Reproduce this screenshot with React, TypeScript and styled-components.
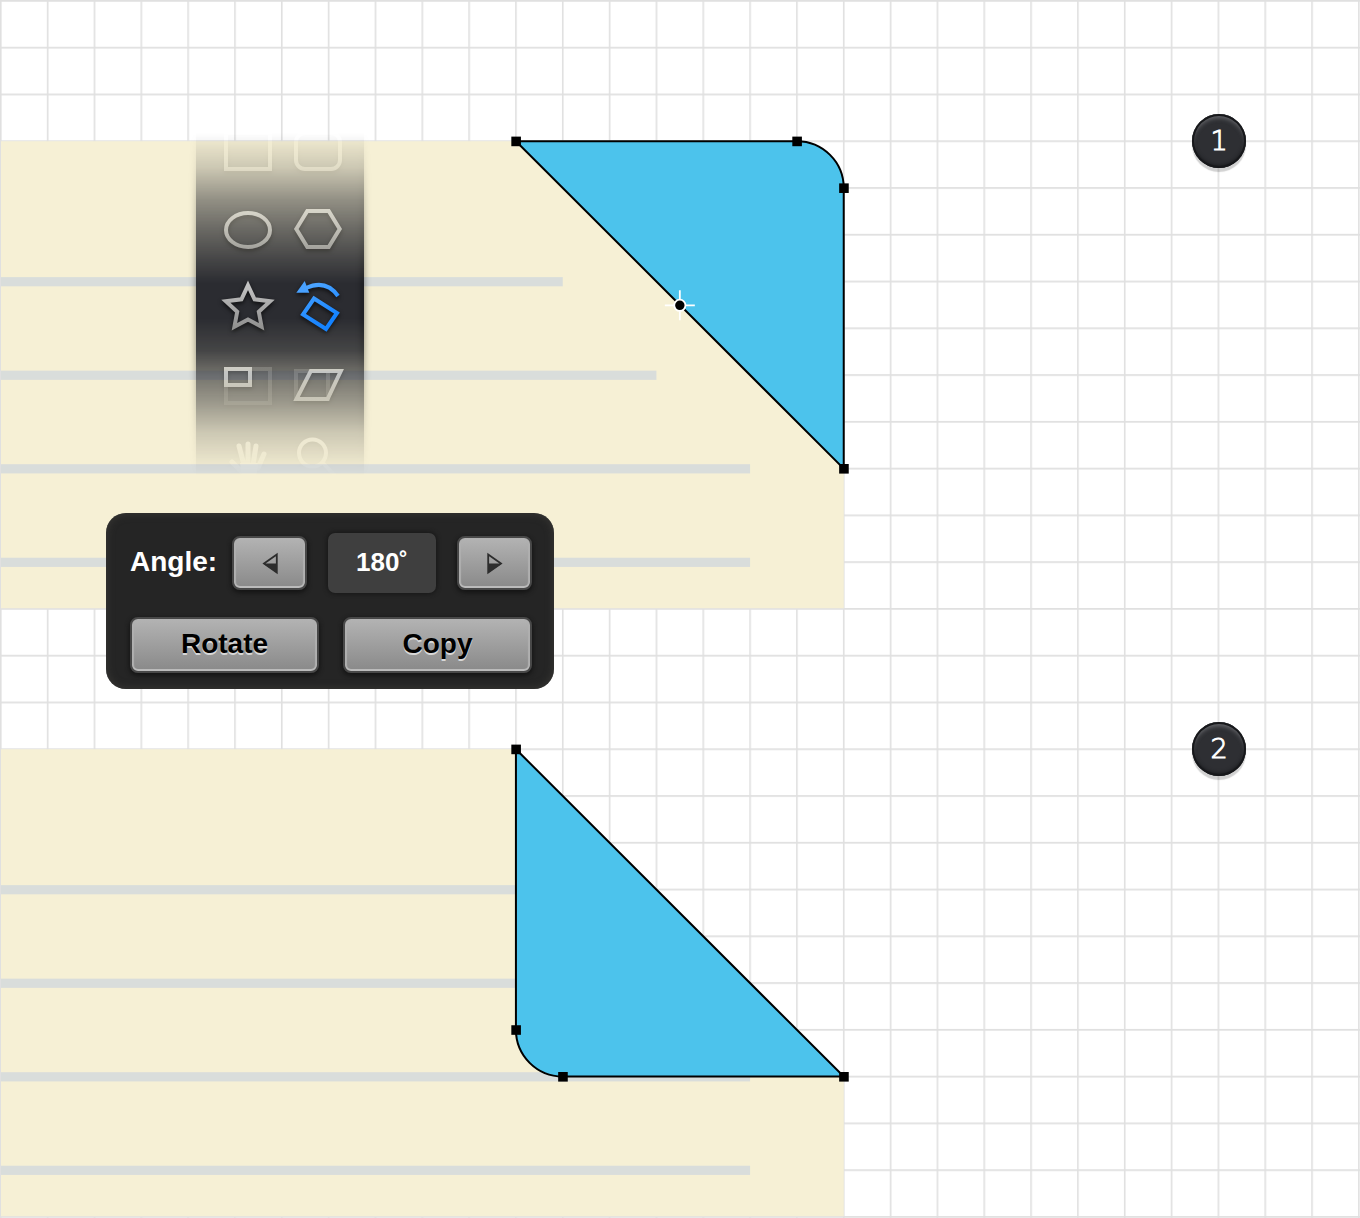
import React from "react";
import styled, { createGlobalStyle, css } from "styled-components";

const GlobalStyle = createGlobalStyle`
  *, *::before, *::after { box-sizing: border-box; }
  body {
    margin: 0;
    background: #fff;
    font-family: "Liberation Sans", Arial, sans-serif;
  }
`;

/* Spacing of the squared background. */
const COL = 46.83;
const ROW = 46.77;
const gx = (n: number) => 0.8 + n * COL;
const gy = (n: number) => 0.9 + n * ROW;

const Page = styled.main`
  position: relative;
  min-height: 100vh;
  overflow: hidden;
`;

const GridPaper = styled.svg`
  position: absolute;
  inset: 0;
  width: 100%;
  height: 100%;
`;

const Step = styled.section<{ $front?: boolean }>`
  position: relative;
  z-index: ${(p) => (p.$front ? 2 : 1)};
  display: flex;
  justify-content: flex-end;
  align-items: flex-start;
  height: 608px;
  padding: 114px 114px 0 0;
`;

const Artwork = styled.svg`
  position: absolute;
  top: 0;
  left: 0;
  overflow: visible;
`;

const Badge = styled.span`
  position: relative;
  display: grid;
  place-items: center;
  width: 54px;
  height: 54px;
  border-radius: 50%;
  background: #2e2f33;
  color: #fff;
  font: 200 27px/54px "DejaVu Sans", "DejaVu Sans Light", sans-serif;
  -webkit-text-stroke: 1px #fff;
  box-shadow:
    inset 0 0 0 2px #17181b,
    inset 0 4px 4px #66676b,
    inset 0 -2px 4px #111215,
    0 4px 1px rgba(0, 0, 0, 0.18);
`;

const ToolStrip = styled.div`
  position: absolute;
  top: 115px;
  left: 188px;
  padding: 8px;
  mask-image: linear-gradient(
    to bottom,
    transparent 18px,
    rgba(0, 0, 0, 0.06) 28px,
    rgba(0, 0, 0, 0.2) 52px,
    rgba(0, 0, 0, 0.5) 86px,
    rgba(0, 0, 0, 0.7) 116px,
    rgba(0, 0, 0, 0.88) 146px,
    #000 168px,
    #000 204px,
    rgba(0, 0, 0, 0.87) 236px,
    rgba(0, 0, 0, 0.64) 260px,
    rgba(0, 0, 0, 0.46) 286px,
    rgba(0, 0, 0, 0.2) 318px,
    rgba(0, 0, 0, 0.06) 346px,
    transparent 360px
  );
`;

const Tools = styled.div`
  display: grid;
  grid-template-columns: 56px 56px;
  gap: 22px 14px;
  width: 168px;
  padding-left: 24px;
  background: #2b2c31;
  box-shadow:
    inset -4px 0 4px rgba(0, 0, 0, 0.25),
    0 0 7px rgba(0, 0, 0, 0.5);
`;

const ToolButton = styled.button<{ $active?: boolean }>`
  display: block;
  width: 56px;
  height: 56px;
  padding: 0;
  border: 0;
  background: none;
  cursor: pointer;

  svg {
    display: block;
    fill: none;
    stroke: url(${(p) => (p.$active ? "#tool-blue" : "#tool-gray")});
    stroke-width: 4px;
    filter: drop-shadow(0 2px 2px rgba(0, 0, 0, 0.7));
  }
`;

const Panel = styled.form`
  position: absolute;
  top: 513px;
  left: 106px;
  display: grid;
  gap: 24px;
  width: 448px;
  padding: 20px 22px 16px 24px;
  border-radius: 20px;
  background: #252525;
  box-shadow: inset 0 0 8px #3b3a37;
`;

const PanelRow = styled.div`
  display: flex;
  align-items: center;
  gap: 21px;
`;

const ActionRow = styled(PanelRow)`
  gap: 24px;
`;

const AngleLabel = styled.label`
  flex: 1;
  margin: 0 -20px 2px 0;
  color: #fff;
  font-size: 28px;
  line-height: 32px;
  font-weight: 700;
  white-space: nowrap;
`;

const AngleInput = styled.input`
  width: 108px;
  height: 60px;
  padding: 0 0 2px;
  border: 0;
  border-radius: 7px;
  background: #3f3f3f;
  color: #fff;
  font: 700 26px/32px "Liberation Sans", Arial, sans-serif;
  text-align: center;
  box-shadow: 0 0 4px 1px #171717;
`;

const raised = css`
  border: 2px solid #484848;
  border-radius: 8px;
  background: linear-gradient(#b3b3b3, #898989);
  box-shadow:
    inset 0 -2px 0 #bbb,
    inset 2px 0 1px #b0b0b0,
    inset -2px 0 1px #b0b0b0,
    0 2px 4px 1px #151515;
  cursor: pointer;
`;

const NudgeButton = styled.button`
  ${raised}
  display: grid;
  place-items: center;
  width: 75px;
  height: 54px;
  padding: 0;
`;

const ActionButton = styled.button`
  ${raised}
  flex: 1;
  height: 56px;
  padding: 0 0 2px;
  color: #000;
  font: 700 28px/32px "Liberation Sans", Arial, sans-serif;
  text-shadow: 0 2px 0 #d8d8d8;
`;

type Tool = { name: string; active?: boolean; drawing: React.ReactNode };

const tools: Tool[] = [
  { name: "Rectangle", drawing: <rect x="6" y="10" width="44" height="36" /> },
  { name: "Rounded rectangle", drawing: <rect x="6" y="10" width="44" height="36" rx="9" /> },
  { name: "Ellipse", drawing: <ellipse cx="28" cy="29" rx="22" ry="17" /> },
  {
    name: "Polygon",
    drawing: <path d="M17.3 10H38.7L49.7 28L38.7 46H17.3L6.3 28Z" />,
  },
  {
    name: "Star",
    drawing: (
      <path d="M28 6.3L34.6 20.3L50.2 22.2L38.8 32.8L41.6 47.8L28 40.6L14.4 47.8L17.2 32.8L5.8 22.2L21.4 20.3Z" />
    ),
  },
  {
    name: "Rotate",
    active: true,
    drawing: (
      <>
        <path d="M16 9Q36 0 48 17" />
        <path d="M6.3 13.7L14.7 2L19.3 13.7Z" fill="#48a1ff" stroke="none" />
        <path d="M24 19.5L47 34L36 50L13 35.5Z" />
      </>
    ),
  },
  {
    name: "Scale",
    drawing: (
      <>
        <rect x="6" y="12" width="44" height="34" opacity=".25" />
        <rect x="6" y="12" width="24" height="16" />
      </>
    ),
  },
  {
    name: "Shear",
    drawing: (
      <>
        <rect x="6" y="14" width="32" height="28" opacity=".25" />
        <path d="M20.8 14H50.8L37.6 42H6.5Z" />
      </>
    ),
  },
  {
    name: "Hand",
    drawing: (
      <>
        <path
          strokeWidth="5"
          strokeLinecap="round"
          d="M12 27L22 37M19 11L24 30M28 9V29M36 11L33 30M44 19L38 33"
        />
        <path d="M20 28H38L36 44Q28 50 22 42Z" fill="#ccc" stroke="none" />
      </>
    ),
  },
  {
    name: "Zoom",
    drawing: (
      <>
        <circle cx="22.5" cy="18" r="13.5" />
        <path d="M33 28L48 44" />
      </>
    ),
  },
];

function SquaredBackground() {
  return (
    <GridPaper aria-hidden="true">
      <defs>
        <pattern id="squares" width={COL} height={ROW} patternUnits="userSpaceOnUse">
          <path d={`M.8 0V${ROW}M0 .9H${COL}`} stroke="#000" strokeOpacity=".12" strokeWidth="1.6" />
        </pattern>
        <linearGradient id="tool-gray" gradientUnits="userSpaceOnUse" x1="0" y1="6" x2="0" y2="50">
          <stop offset="0" stopColor="#c4c4c4" />
          <stop offset="1" stopColor="#8c8c8c" />
        </linearGradient>
        <linearGradient id="tool-blue" gradientUnits="userSpaceOnUse" x1="16" y1="6" x2="36" y2="50">
          <stop offset="0" stopColor="#4ea5ff" />
          <stop offset="1" stopColor="#0a7dff" />
        </linearGradient>
      </defs>
      <rect width="100%" height="100%" fill="url(#squares)" />
    </GridPaper>
  );
}

function Handle({ col, row }: { col: number; row: number }) {
  return <rect x={gx(col) - 4.6} y={gy(row) - 4.6} width="9.6" height="9.6" />;
}

function Sheet({
  rules,
  fold,
  handles,
  label,
  children,
}: {
  rules: number[];
  fold: string;
  handles: [number, number][];
  label: string;
  children?: React.ReactNode;
}) {
  return (
    <Artwork width="1360" height="608" role="img" aria-label={label}>
      <path
        fill="#f6f0d5"
        d={`M1 ${gy(3)}H${gx(11)}L${gx(18)} ${gy(10)}V${gy(13) - 0.6}H1Z`}
      />
      {rules.map((end, i) => (
        <rect key={i} y={gy(6 + i * 2) - 4.4} x="1" width={gx(end) - 1} height="9.2" fill="#d9dddb" />
      ))}
      <path d={fold} fill="#4cc3ec" stroke="#000" strokeWidth="2" />
      {handles.map(([c, r]) => (
        <Handle key={`${c}-${r}`} col={c} row={r} />
      ))}
      {children}
    </Artwork>
  );
}

function Pivot() {
  return (
    <g transform={`translate(${gx(14.5)} ${gy(6.5) + 0.4})`}>
      <path d="M0-15V-6M0 6V15M-15 0H-6M6 0H15" stroke="#fff" strokeWidth="1.8" />
      <circle r="5.6" stroke="#fff" strokeWidth="1.8" />
    </g>
  );
}

function ToolPalette() {
  return (
    <ToolStrip>
      <Tools role="toolbar" aria-label="Tools">
        {tools.map((t) => (
          <ToolButton key={t.name} type="button" aria-label={t.name} $active={t.active}>
            <svg width="56" height="56" viewBox="0 0 56 56" aria-hidden="true">
              {t.drawing}
            </svg>
          </ToolButton>
        ))}
      </Tools>
    </ToolStrip>
  );
}

function NudgeArrow({ back }: { back?: boolean }) {
  return (
    <svg width="20" height="24" viewBox="0 0 20 24" aria-hidden="true">
      <g transform={back ? "translate(20 0) scale(-1 1)" : undefined}>
        <path d="M3.2 3.5L16 12.5L3.2 21.5Z" fill="none" stroke="#2d2d2d" strokeWidth="1.8" />
        <path d="M3 12.5H17L3 22Z" fill="#2d2d2d" />
      </g>
    </svg>
  );
}

function RotatePanel() {
  return (
    <Panel onSubmit={(e) => e.preventDefault()}>
      <PanelRow>
        <AngleLabel htmlFor="angle">Angle:</AngleLabel>
        <NudgeButton type="button" aria-label="Decrease angle">
          <NudgeArrow back />
        </NudgeButton>
        <AngleInput id="angle" type="text" defaultValue="180˚" />
        <NudgeButton type="button" aria-label="Increase angle">
          <NudgeArrow />
        </NudgeButton>
      </PanelRow>
      <ActionRow>
        <ActionButton type="submit">Rotate</ActionButton>
        <ActionButton type="button">Copy</ActionButton>
      </ActionRow>
    </Panel>
  );
}

export default function App() {
  return (
    <>
      <GlobalStyle />
      <Page>
        <SquaredBackground />
        <Step $front>
          <Sheet
            label="Sheet with its corner marked"
            rules={[12, 14, 16, 16]}
            fold={`M${gx(11)} ${gy(3)}H${gx(17)}A${COL} ${ROW} 0 0 1 ${gx(18)} ${gy(4)}V${gy(10)}Z`}
            handles={[[11, 3], [17, 3], [18, 4], [18, 10]]}
          >
            <Pivot />
          </Sheet>
          <ToolPalette />
          <RotatePanel />
          <Badge>1</Badge>
        </Step>
        <Step>
          <Sheet
            label="Sheet with its corner folded over"
            rules={[12, 14, 16, 16]}
            fold={`M${gx(11)} ${gy(3)}V${gy(9)}A${COL} ${ROW} 0 0 0 ${gx(12)} ${gy(10)}H${gx(18)}Z`}
            handles={[[11, 3], [11, 9], [12, 10], [18, 10]]}
          />
          <Badge>2</Badge>
        </Step>
      </Page>
    </>
  );
}
